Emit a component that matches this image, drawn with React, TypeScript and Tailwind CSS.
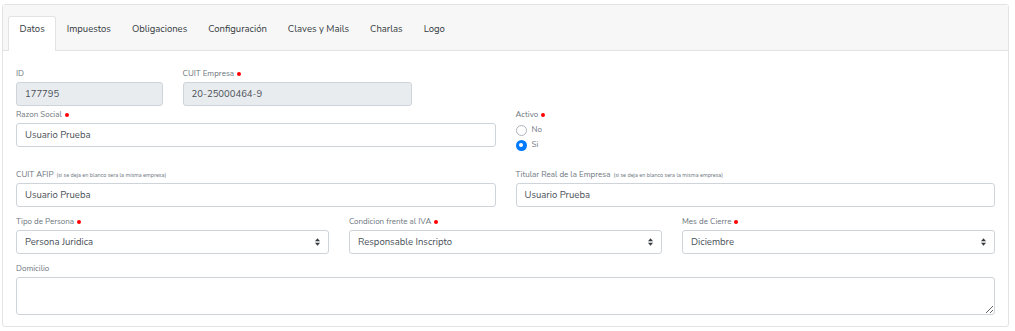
import React from "react";

const tabs = ["Datos", "Impuestos", "Obligaciones", "Configuración", "Claves y Mails", "Charlas", "Logo"];

function Req() {
  return <span className="ml-[3px] inline-block h-[4px] w-[4px] rounded-full bg-[#ff0000] align-middle" />;
}

function Label({ children, req, note }: { children: React.ReactNode; req?: boolean; note?: string }) {
  return (
    <div className="mb-[3px] h-[11px] text-[8px] leading-[11px] text-[#6c757d]">
      {children}
      {note && <span className="ml-[3px] text-[5.5px]">{note}</span>}
      {req && <Req />}
    </div>
  );
}

function Input({ value, disabled }: { value: string; disabled?: boolean }) {
  return (
    <div
      className={
        "flex h-[24px] items-center rounded-[3px] border border-[#ced4da] px-[8px] text-[9.5px] text-[#495057] " +
        (disabled ? "bg-[#e9ecef]" : "bg-white")
      }
    >
      {value}
    </div>
  );
}

function Select({ value }: { value: string }) {
  return (
    <div className="flex h-[24px] items-center justify-between rounded-[3px] border border-[#ced4da] bg-white pl-[8px] pr-[8px] text-[9.5px] text-[#495057]">
      <span>{value}</span>
      <svg width="5" height="8" viewBox="0 0 6 9" fill="#343a40">
        <path d="M3 0 L6 3.5 H0 Z" />
        <path d="M3 9 L6 5.5 H0 Z" />
      </svg>
    </div>
  );
}

function Radio({ checked, label }: { checked?: boolean; label: string }) {
  return (
    <div className="flex h-[14px] items-center gap-[5px] text-[8px] text-[#6c757d]">
      {checked ? (
        <span className="flex h-[11px] w-[11px] items-center justify-center rounded-full bg-[#007bff]">
          <span className="h-[4px] w-[4px] rounded-full bg-white" />
        </span>
      ) : (
        <span className="h-[11px] w-[11px] rounded-full border border-[#adb5bd] bg-white" />
      )}
      {label}
    </div>
  );
}

export default function App() {
  return (
    <div className="h-[331px] w-[1015px] bg-white pl-[2px] pr-[6px] pt-[4px] font-['Nunito','Lato',sans-serif]">
      <div className="h-[323px] rounded-[3px] border border-[#e3e3e3]">
        <div className="flex h-[46px] items-end border-b border-[#e3e3e3] bg-[#f7f7f7] pl-[5px]">
          {tabs.map((t, i) => (
            <div
              key={t}
              className={
                "mb-[-1px] flex h-[35px] items-center px-[10.5px] pb-[9px] text-[9.5px] text-[#343a40] " +
                (i === 0 ? "rounded-t-[3px] border border-b-0 border-[#e3e3e3] bg-white" : "")
              }
            >
              {t}
            </div>
          ))}
        </div>
        <div className="px-[13px] pt-[17px]">
          <div className="grid grid-cols-12 gap-x-[20px]">
            <div className="col-span-2">
              <Label>ID</Label>
              <Input value="177795" disabled />
            </div>
            <div className="col-span-3">
              <Label req>CUIT Empresa</Label>
              <Input value="20-25000464-9" disabled />
            </div>
          </div>
          <div className="mt-[3px] grid grid-cols-2 gap-x-[20px]">
            <div>
              <Label req>Razon Social</Label>
              <Input value="Usuario Prueba" />
            </div>
            <div>
              <Label req>Activo</Label>
              <div className="flex flex-col gap-[1px]">
                <Radio label="No" />
                <Radio checked label="Si" />
              </div>
            </div>
          </div>
          <div className="mt-[17px] grid grid-cols-2 gap-x-[20px]">
            <div>
              <Label note="(si se deja en blanco sera la misma empresa)">CUIT AFIP</Label>
              <Input value="Usuario Prueba" />
            </div>
            <div>
              <Label note="(si se deja en blanco sera la misma empresa)">Titular Real de la Empresa</Label>
              <Input value="Usuario Prueba" />
            </div>
          </div>
          <div className="mt-[9px] grid grid-cols-3 gap-x-[20px]">
            <div>
              <Label req>Tipo de Persona</Label>
              <Select value="Persona Juridica" />
            </div>
            <div>
              <Label req>Condicion frente al IVA</Label>
              <Select value="Responsable Inscripto" />
            </div>
            <div>
              <Label req>Mes de Cierre</Label>
              <Select value="Diciembre" />
            </div>
          </div>
          <div className="mt-[9px]">
            <Label>Domicilio</Label>
            <textarea className="block h-[38px] w-full resize-y rounded-[3px] border border-[#ced4da] bg-white outline-none" />
          </div>
        </div>
      </div>
    </div>
  );
}
